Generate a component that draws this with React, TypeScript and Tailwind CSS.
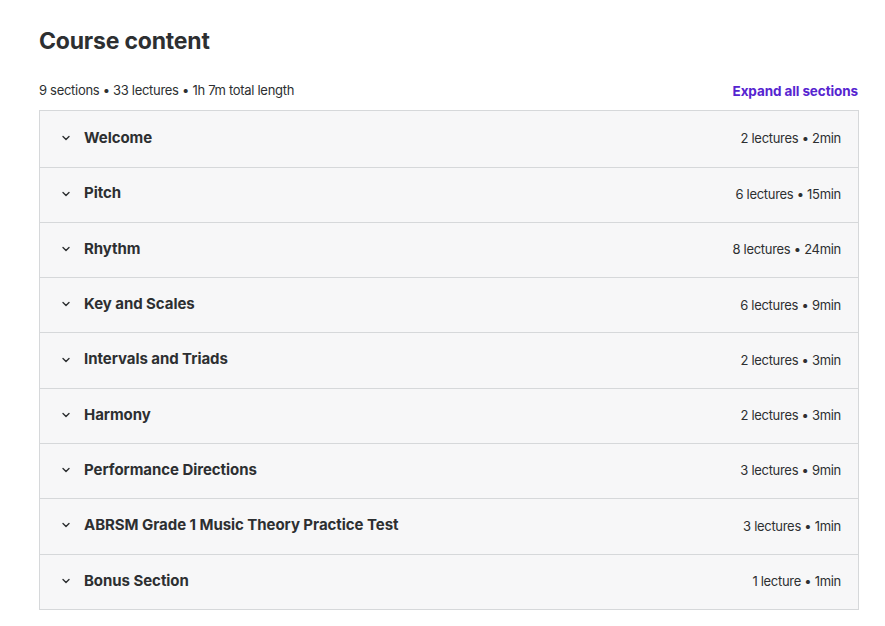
import { FC } from 'react';

type Section = { title: string; meta: string };

const sections: Section[] = [
  { title: 'Welcome', meta: '2 lectures • 2min' },
  { title: 'Pitch', meta: '6 lectures • 15min' },
  { title: 'Rhythm', meta: '8 lectures • 24min' },
  { title: 'Key and Scales', meta: '6 lectures • 9min' },
  { title: 'Intervals and Triads', meta: '2 lectures • 3min' },
  { title: 'Harmony', meta: '2 lectures • 3min' },
  { title: 'Performance Directions', meta: '3 lectures • 9min' },
  { title: 'ABRSM Grade 1 Music Theory Practice Test', meta: '3 lectures • 1min' },
  { title: 'Bonus Section', meta: '1 lecture • 1min' },
];

const Chevron: FC = () => (
  <svg width="10" height="10" viewBox="0 0 10 10" fill="none" className="shrink-0">
    <path d="M2 3.5 5 6.5 8 3.5" stroke="#2d2f31" strokeWidth="1.4" strokeLinecap="round" strokeLinejoin="round" />
  </svg>
);

const SectionRow: FC<Section & { first: boolean }> = ({ title, meta, first }) => (
  <div
    className={`flex items-center justify-between h-[55.3px] pl-[21px] pr-[17px] bg-[#f7f7f8] ${first ? '' : 'border-t border-[#d6d8da]'}`}
  >
    <div className="flex items-center gap-[13px] -mt-[2px]">
      <Chevron />
      <span className="text-[15px] font-bold text-[#2d2f31] tracking-[-0.05px]">{title}</span>
    </div>
    <span className="text-[13px] text-[#2d2f31] tracking-[-0.3px]">{meta}</span>
  </div>
);

export default function App() {
  return (
    <div className="min-h-[626px] bg-white font-['Inter','Liberation_Sans',sans-serif]">
      <div className="w-[820px] ml-[39px] pt-[26px]">
        <h2 className="text-[23px] leading-[30px] font-bold text-[#2d2f31] tracking-[-0.2px]">Course content</h2>
        <div className="flex items-center justify-between mt-[25px] mb-[9px]">
          <span className="text-[13px] text-[#2d2f31] tracking-[-0.3px]">9 sections • 33 lectures • 1h 7m total length</span>
          <button className="text-[13.5px] font-bold text-[#5624d0] tracking-[-0.1px] mr-[1px]">Expand all sections</button>
        </div>
        <div className="border border-[#d6d8da]">
          {sections.map((s, i) => (
            <SectionRow key={s.title} {...s} first={i === 0} />
          ))}
        </div>
      </div>
    </div>
  );
}
